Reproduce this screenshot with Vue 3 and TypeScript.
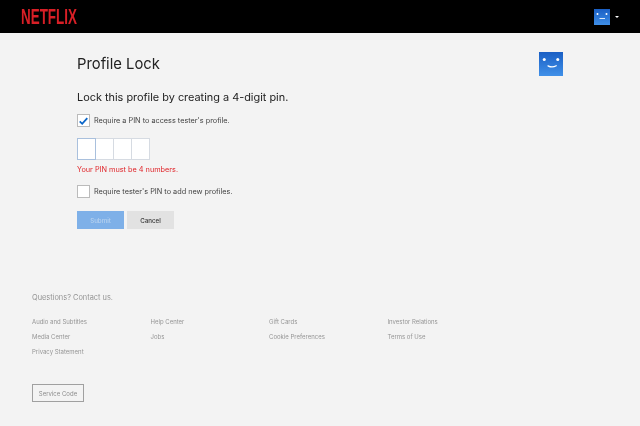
<script setup lang="ts">
const footerLinks: string[][] = [
  ['Audio and Subtitles', 'Media Center', 'Privacy Statement'],
  ['Help Center', 'Jobs'],
  ['Gift Cards', 'Cookie Preferences'],
  ['Investor Relations', 'Terms of Use'],
]
</script>

<template>
  <div class="page">
    <header class="topbar">
      <span class="logo">NETFLIX</span>
      <div class="account">
        <svg class="avatar-small" viewBox="0 0 32 32" aria-hidden="true">
          <defs>
            <linearGradient id="ga" x1="0" y1="0" x2="0" y2="1">
              <stop offset="0" stop-color="#1a5fc4" />
              <stop offset="1" stop-color="#3f8fe8" />
            </linearGradient>
          </defs>
          <rect width="32" height="32" fill="url(#ga)" />
          <circle cx="7" cy="10" r="2" fill="#fff" />
          <circle cx="25" cy="10" r="2" fill="#fff" />
          <rect x="11" y="18" width="11" height="2" fill="#dfeaf8" />
        </svg>
        <span class="caret"></span>
      </div>
    </header>

    <main class="content">
      <div class="title-row">
        <h1>Profile Lock</h1>
        <svg class="avatar" viewBox="0 0 32 32" aria-hidden="true">
          <defs>
            <linearGradient id="gb" x1="0" y1="0" x2="0" y2="1">
              <stop offset="0" stop-color="#1a5fc4" />
              <stop offset="1" stop-color="#4090e8" />
            </linearGradient>
          </defs>
          <rect width="32" height="32" fill="url(#gb)" />
          <circle cx="7" cy="10" r="2" fill="#fff" />
          <circle cx="25" cy="10" r="2" fill="#fff" />
          <path d="M12 18.5c3 1.6 8 1.6 11-.2" fill="none" stroke="#fff" stroke-width="1.6" stroke-linecap="round" />
        </svg>
      </div>
      <h2>Lock this profile by creating a 4-digit pin.</h2>

      <label class="check-row">
        <span class="box">
          <svg viewBox="0 0 16 16" width="12" height="12" aria-hidden="true">
            <path d="M2.5 8.5l3.6 3.6 7.4-8.4" fill="none" stroke="#0b66c9" stroke-width="2.6" />
          </svg>
        </span>
        <span>Require a PIN to access tester's profile.</span>
      </label>

      <div class="pin">
        <span class="cell active"></span>
        <span class="cell"></span>
        <span class="cell"></span>
        <span class="cell"></span>
      </div>
      <p class="error">Your PIN must be 4 numbers.</p>

      <label class="check-row second">
        <span class="box"></span>
        <span>Require tester's PIN to add new profiles.</span>
      </label>

      <div class="actions">
        <button class="btn submit" type="button">Submit</button>
        <button class="btn cancel" type="button">Cancel</button>
      </div>
    </main>

    <footer class="footer">
      <p class="contact">Questions? Contact us.</p>
      <div class="links">
        <ul v-for="(col, i) in footerLinks" :key="i">
          <li v-for="link in col" :key="link">{{ link }}</li>
        </ul>
      </div>
      <button class="service" type="button">Service Code</button>
    </footer>
  </div>
</template>

<style>
html, body { margin: 0; background: #f3f3f3; }
</style>

<style scoped>
.page {
  width: 640px;
  height: 426px;
  overflow: hidden;
  background: #f3f3f3;
  font-family: Inter, "Liberation Sans", sans-serif;
  color: #333;
  filter: blur(0.35px);
}
.topbar {
  height: 33px;
  background: #000;
  display: flex;
  align-items: center;
  justify-content: space-between;
  padding: 0 21px;
}
.logo {
  font-family: "Liberation Sans", sans-serif;
  font-weight: 700;
  font-size: 22px;
  line-height: 22px;
  color: #d81f26;
  display: inline-block;
  transform: scaleX(0.61);
  transform-origin: left center;
}
.account { display: flex; align-items: center; gap: 5px; }
.avatar-small { width: 16px; height: 16px; display: block; }
.caret {
  width: 0; height: 0;
  border-left: 2.5px solid transparent;
  border-right: 2.5px solid transparent;
  border-top: 2.5px solid #fff;
}
.content { padding: 19px 77px 0; }
.title-row {
  display: flex;
  justify-content: space-between;
  align-items: flex-start;
}
h1 {
  margin: 0;
  font-size: 14.8px;
  line-height: 24px;
  font-weight: 400;
  color: #222;
}
.avatar { width: 24px; height: 24px; display: block; }
h2 {
  margin: 12px 0 0;
  font-size: 10.9px;
  line-height: 18px;
  font-weight: 400;
  color: #222;
}
.check-row {
  display: flex;
  align-items: center;
  gap: 4px;
  font-size: 7.3px;
  color: #444;
  margin-top: 8px;
}
.box {
  width: 13px;
  height: 13px;
  box-sizing: border-box;
  background: #fff;
  border: 0.5px solid #bbb;
  display: flex;
  align-items: center;
  justify-content: center;
}
.pin { display: flex; margin-top: 11px; width: 73px; }
.cell {
  flex: 1;
  box-sizing: border-box;
  height: 22px;
  background: #fff;
  border: 1px solid #d6dbe2;
  border-left: none;
}
.cell.active { border: 1px solid #a9c0dd; }
.error {
  margin: 4px 0 0;
  font-size: 7.3px;
  line-height: 12px;
  color: #e0262b;
}
.second { margin-top: 9px; }
.actions { display: flex; gap: 3px; margin-top: 13px; }
.btn {
  width: 47px;
  height: 18px;
  border: none;
  padding: 0;
  font-family: inherit;
  font-size: 6.2px;
  font-weight: 500;
}
.submit { background: #7eb0e8; color: #b6d1ef; }
.cancel { background: #e2e2e2; color: #333; }
.footer {
  padding: 0 32px;
  margin-top: 63px;
  color: #959595;
}
.contact { margin: 0; font-size: 7.4px; line-height: 12px; }
.links {
  display: grid;
  grid-template-columns: repeat(4, 118.5px);
  margin-top: 10px;
  height: 46px;
}
ul { margin: 0; padding: 0; list-style: none; }
li { font-size: 6px; line-height: 15.2px; }
.service {
  display: block;
  margin-top: 24px;
  width: 52px;
  height: 18px;
  padding: 0;
  background: transparent;
  border: 1px solid #a0a0a0;
  color: #8c8c8c;
  font-family: inherit;
  font-size: 6px;
}
</style>
